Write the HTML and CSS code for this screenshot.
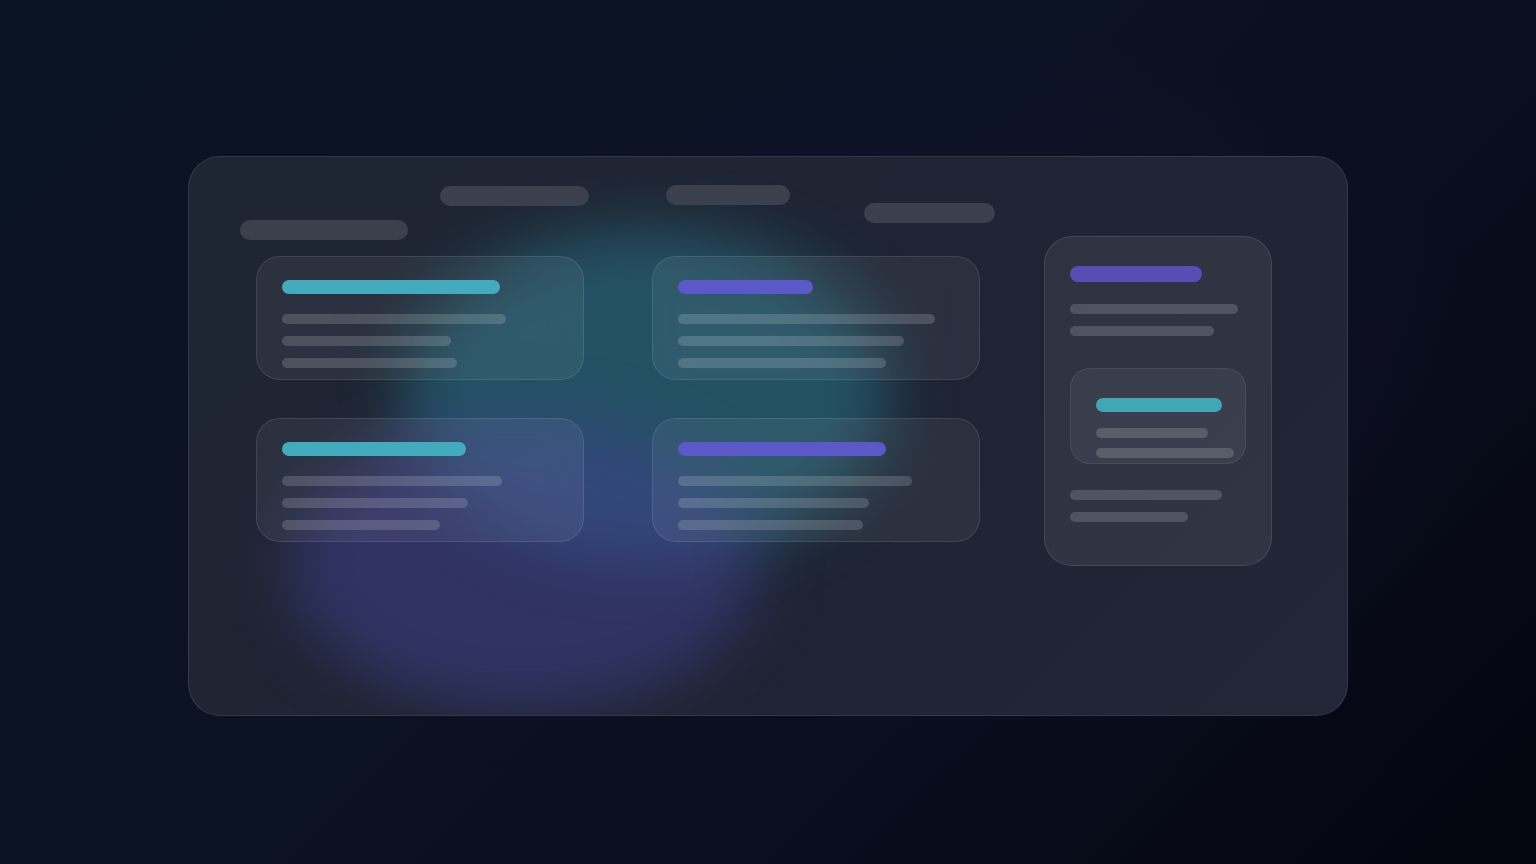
FILE: index.html
```html
<!DOCTYPE html>
<html lang="en">
<head>
<meta charset="utf-8">
<title>Dashboard skeleton</title>
<link rel="stylesheet" href="styles.css">
</head>
<body>
<div class="stage">
  <div class="panel">
    <div class="blob blob-cyan"></div>
    <div class="blob blob-purple"></div>
    <div class="header">
      <div class="hbar hbar-a"></div>
      <div class="hbar hbar-b"></div>
      <div class="hbar hbar-c"></div>
      <div class="hbar hbar-d"></div>
    </div>
    <div class="body">
      <div class="grid">
        <div class="card">
          <div class="title cyan" style="width:218px"></div>
          <div class="lines">
            <div class="line" style="width:224px"></div>
            <div class="line" style="width:169px"></div>
            <div class="line" style="width:175px"></div>
          </div>
        </div>
        <div class="card">
          <div class="title purple" style="width:135px"></div>
          <div class="lines">
            <div class="line" style="width:257px"></div>
            <div class="line" style="width:226px"></div>
            <div class="line" style="width:208px"></div>
          </div>
        </div>
        <div class="card">
          <div class="title cyan" style="width:184px"></div>
          <div class="lines">
            <div class="line" style="width:220px"></div>
            <div class="line" style="width:186px"></div>
            <div class="line" style="width:158px"></div>
          </div>
        </div>
        <div class="card">
          <div class="title purple" style="width:208px"></div>
          <div class="lines">
            <div class="line" style="width:234px"></div>
            <div class="line" style="width:191px"></div>
            <div class="line" style="width:185px"></div>
          </div>
        </div>
      </div>
      <div class="side">
        <div class="side-title"></div>
        <div class="lines side-lines">
          <div class="line" style="width:168px"></div>
          <div class="line" style="width:144px"></div>
        </div>
        <div class="inner">
          <div class="inner-title"></div>
          <div class="inner-lines">
            <div class="line" style="width:112px"></div>
            <div class="line" style="width:138px"></div>
          </div>
        </div>
        <div class="lines side-foot">
          <div class="line" style="width:152px"></div>
          <div class="line" style="width:118px"></div>
        </div>
      </div>
    </div>
  </div>
</div>
</body>
</html>
```

FILE: styles.css
```css
* { box-sizing: border-box; }

html, body {
  margin: 0;
  height: 100%;
}

body {
  font-family: "Inter", "Liberation Sans", sans-serif;
  background:
    radial-gradient(ellipse 700px 500px at 1000px 380px, rgba(30, 28, 60, 0.4), rgba(0, 0, 0, 0) 70%),
    linear-gradient(135deg, #0a1323 0%, #0b1224 45%, #0a0d1d 70%, #03060e 100%);
  overflow: hidden;
}

.stage {
  width: 1536px;
  height: 864px;
  padding-top: 156px;
  padding-left: 188px;
}

.panel {
  position: relative;
  width: 1160px;
  height: 560px;
  border-radius: 32px;
  background: linear-gradient(135deg, #1f2633 0%, #1e2433 55%, #212736 100%);
  border: 1px solid rgba(255, 255, 255, 0.09);
  overflow: hidden;
  padding: 28px 51px;
}

.blob {
  position: absolute;
  border-radius: 50%;
  z-index: 0;
  pointer-events: none;
}

.blob-cyan {
  left: 215px;
  top: 72px;
  width: 485px;
  height: 330px;
  background: rgba(40, 118, 140, 0.55);
  filter: blur(30px);
}

.blob-purple {
  left: 100px;
  top: 262px;
  width: 470px;
  height: 290px;
  background: rgba(64, 64, 140, 0.55);
  filter: blur(30px);
}

.header,
.body {
  position: relative;
  z-index: 1;
}

.header {
  display: flex;
  align-items: flex-start;
  height: 51px;
}

.hbar {
  height: 20px;
  border-radius: 10px;
  background: #3a404c;
  flex: none;
}

.hbar-a { width: 168px; margin-top: 35px; }
.hbar-b { width: 149px; margin-top: 1px; margin-left: 32px; }
.hbar-c { width: 124px; margin-top: 0; margin-left: 77px; }
.hbar-d { width: 131px; margin-top: 18px; margin-left: 74px; }

.body {
  display: flex;
  align-items: flex-start;
}

.grid {
  display: grid;
  grid-template-columns: 328px 328px;
  column-gap: 68px;
  row-gap: 38px;
  margin-left: 16px;
  margin-top: 20px;
}

.card {
  height: 124px;
  border-radius: 24px;
  background: rgba(255, 255, 255, 0.06);
  border: 1px solid rgba(255, 255, 255, 0.1);
  padding: 23px 25px;
  backdrop-filter: blur(16px);
}

.title {
  height: 14px;
  border-radius: 7px;
}

.cyan { background: #44aabe; }
.purple { background: #5b58c8; }

.lines {
  display: flex;
  flex-direction: column;
  gap: 12px;
  margin-top: 20px;
}

.line {
  height: 10px;
  border-radius: 5px;
  background: rgba(255, 255, 255, 0.16);
}

.side {
  width: 228px;
  height: 330px;
  margin-left: 64px;
  border-radius: 28px;
  background: rgba(255, 255, 255, 0.07);
  border: 1px solid rgba(255, 255, 255, 0.1);
  padding: 29px 25px;
  flex: none;
}

.side-title {
  width: 132px;
  height: 16px;
  border-radius: 8px;
  background: #574db4;
}

.side-lines { margin-top: 22px; }

.inner {
  width: 176px;
  height: 96px;
  margin-top: 32px;
  border-radius: 20px;
  background: rgba(255, 255, 255, 0.05);
  border: 1px solid rgba(255, 255, 255, 0.08);
  padding: 29px 25px;
}

.inner-title {
  width: 126px;
  height: 14px;
  border-radius: 7px;
  background: #43a6b7;
}

.inner-lines {
  display: flex;
  flex-direction: column;
  gap: 10px;
  margin-top: 16px;
}

.side-foot { margin-top: 26px; }
```
